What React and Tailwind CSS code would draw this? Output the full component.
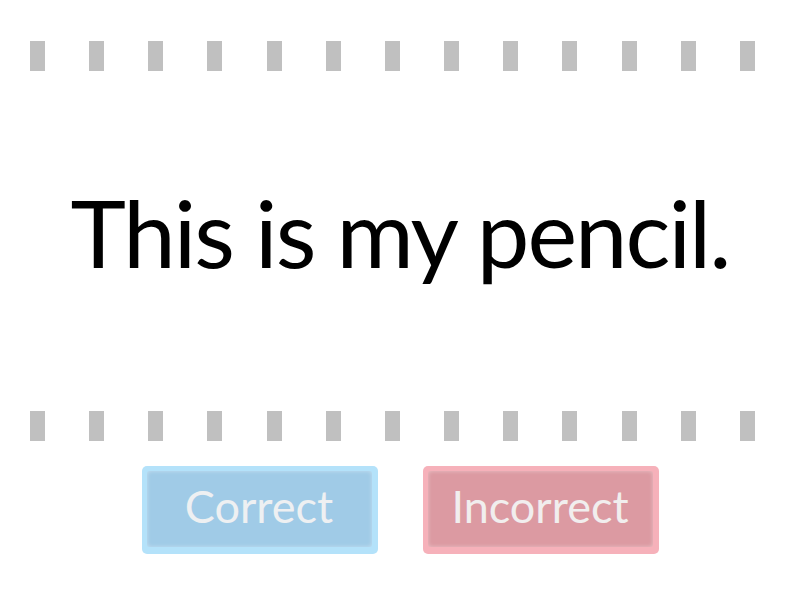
export default function App() {
  const dashes = Array.from({ length: 13 }, (_, i) => i);

  const DashRow = () => (
    <div className="flex justify-between pl-[30px] pr-[45px] w-full">
      {dashes.map((i) => (
        <div key={i} className="w-[15px] h-[30px] bg-[#c0c0c0]" />
      ))}
    </div>
  );

  return (
    <div className="w-[800px] h-[600px] bg-white flex flex-col items-center pt-[41px] font-['Lato',sans-serif]">
      <DashRow />
      <div className="h-[340px] flex items-center justify-center pb-[18px]">
        <h1 className="text-[94px] leading-none text-black tracking-[-2px]">This is my pencil.</h1>
      </div>
      <DashRow />
      <div className="flex gap-[45px] mt-[25px]">
        <button className="w-[236px] h-[88px] rounded-[5px] bg-[#b4e2fa] p-[5px] pr-[6px] pb-[7px]">
          <div className="w-full h-full rounded-[3px] bg-[#a0cbe7] shadow-[inset_0_0_4px_rgba(255,255,255,0.4)] flex items-center justify-center text-[45px] text-[#eef0f2] pb-[4px]">
            Correct
          </div>
        </button>
        <button className="w-[236px] h-[88px] rounded-[5px] bg-[#f6b1ba] p-[5px] pr-[6px] pb-[7px]">
          <div className="w-full h-full rounded-[3px] bg-[#dc9aa2] shadow-[inset_0_0_4px_rgba(255,255,255,0.4)] flex items-center justify-center text-[45px] text-[#f1eeee] pb-[4px]">
            Incorrect
          </div>
        </button>
      </div>
    </div>
  );
}
